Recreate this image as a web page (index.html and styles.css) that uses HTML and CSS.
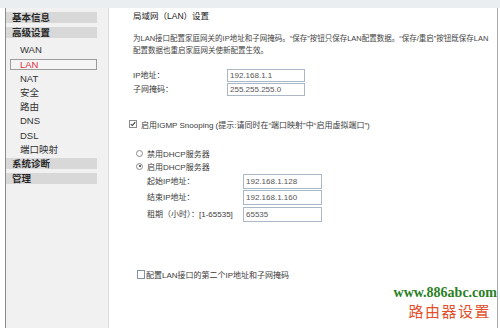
FILE: index.html
```html
<!DOCTYPE html>
<html lang="zh-CN">
<head>
<meta charset="utf-8">
<title>局域网（LAN）设置</title>
<link rel="stylesheet" href="styles.css">
</head>
<body>
<div class="topband"></div>
<div class="frame">
  <nav class="side">
    <div class="hd">基本信息</div>
    <div class="hd">高级设置</div>
    <ul class="sub">
      <li>WAN</li>
      <li class="active"><span>LAN</span></li>
      <li>NAT</li>
      <li>安全</li>
      <li>路由</li>
      <li>DNS</li>
      <li>DSL</li>
      <li>端口映射</li>
    </ul>
    <div class="hd">系统诊断</div>
    <div class="hd">管理</div>
  </nav>
  <main class="main">
    <h1 class="title">局域网（LAN）设置</h1>
    <p class="desc">为LAN接口配置家庭网关的IP地址和子网掩码。“保存”按钮只保存LAN配置数据。“保存/重启”按钮既保存LAN<br>配置数据也重启家庭网关使新配置生效。</p>

    <div class="ipgrid">
      <span class="lbl">IP地址：</span><span class="inp">192.168.1.1</span>
      <span class="lbl">子网掩码：</span><span class="inp">255.255.255.0</span>
    </div>

    <div class="check igmp">
      <span class="cb"><svg viewBox="0 0 8 8" width="6" height="6"><polyline points="1,4 3,6 7,1.5" fill="none" stroke="#2b3a2b" stroke-width="1.4"/></svg></span>
      <span>启用IGMP Snooping (提示:请同时在“端口映射”中“启用虚拟端口”)</span>
    </div>

    <div class="radios">
      <div class="radio"><span class="rb"></span><span>禁用DHCP服务器</span></div>
      <div class="radio"><span class="rb on"></span><span>启用DHCP服务器</span></div>
    </div>

    <div class="dhcpgrid">
      <span class="lbl">起始IP地址：</span><span class="inp">192.168.1.128</span>
      <span class="lbl">结束IP地址：</span><span class="inp">192.168.1.160</span>
      <span class="lbl">租期（小时）：[1-65535]</span><span class="inp">65535</span>
    </div>

    <div class="check second">
      <span class="cb empty"></span>
      <span>配置LAN接口的第二个IP地址和子网掩码</span>
    </div>
  </main>
</div>
<div class="watermark">
  <div class="wm-url">www.886abc.com</div>
  <div class="wm-cn">路由器设置</div>
</div>
</body>
</html>
```

FILE: styles.css
```css
html, body {
  margin: 0;
  padding: 0;
}
body {
  width: 500px;
  height: 328px;
  overflow: hidden;
  background: #ffffff;
  font-family: "Liberation Sans", "Noto Sans CJK SC", sans-serif;
  color: #333;
  position: relative;
}
.topband {
  height: 8px;
  background: #eaeef0;
}
.frame {
  display: flex;
  height: 320px;
}
.side {
  box-sizing: border-box;
  width: 104px;
  margin-left: 5px;
  border-left: 1px solid #8c8c8c;
  border-right: 1px solid #dedede;
  background: #f1f1f1;
  padding-top: 4px;
  font-size: 9.5px;
}
.hd {
  width: 91px;
  height: 11px;
  line-height: 11px;
  background: #d8d8d8;
  padding-left: 6px;
  box-sizing: border-box;
  font-weight: 700;
  color: #262626;
  margin-bottom: 4px;
  white-space: nowrap;
}
.sub {
  list-style: none;
  margin: 0 0 0.7px 0;
  padding: 1px 0 0 0;
}
.sub li {
  height: 14.3px;
  line-height: 14.3px;
  padding-left: 14px;
  color: #333;
  white-space: nowrap;
}
.sub li.active {
  padding-left: 4px;
  display: flex;
  align-items: center;
}
.sub li.active span {
  box-sizing: border-box;
  width: 87px;
  height: 11px;
  line-height: 9px;
  border: 1px solid #9c9c9c;
  padding-left: 9px;
  color: #e0303c;
  background: #f4f4f4;
}
.main {
  box-sizing: border-box;
  width: 389px;
  border-right: 1px solid #acacac;
  padding: 3px 0 0 24px;
  font-size: 8px;
  color: #3a3a3a;
}
.title {
  margin: 0;
  font-size: 8.5px;
  font-weight: 400;
  line-height: 11px;
  color: #202020;
  white-space: nowrap;
}
.desc {
  margin: 11px 0 0 0;
  line-height: 11.5px;
  white-space: nowrap;
  font-size: 7.5px;
  color: #444;
}
.ipgrid {
  display: grid;
  grid-template-columns: 94px 78px;
  grid-auto-rows: 13px;
  row-gap: 1px;
  margin-top: 13px;
  align-items: center;
}
.dhcpgrid {
  display: grid;
  grid-template-columns: 96px 79px;
  grid-auto-rows: 15px;
  row-gap: 1.5px;
  margin-top: 1px;
  padding-left: 14px;
  align-items: center;
}
.lbl {
  white-space: nowrap;
  line-height: 11px;
}
.inp {
  box-sizing: border-box;
  height: 100%;
  border: 1px solid #a9b7c6;
  background: #fff;
  padding-left: 2px;
  color: #555;
  display: flex;
  align-items: center;
  white-space: nowrap;
}
.check {
  display: flex;
  align-items: center;
  height: 11px;
  white-space: nowrap;
}
.igmp {
  margin-top: 22.5px;
  margin-left: -4px;
  gap: 4px;
}
.cb {
  box-sizing: border-box;
  width: 8px;
  height: 8px;
  border: 1px solid #8b8b8b;
  background: #fff;
  display: flex;
  align-items: center;
  justify-content: center;
  flex: none;
}
.cb.empty {
  border-color: #7f93ad;
  width: 8px;
  height: 9px;
}
.radios {
  margin-top: 17px;
  padding-left: 3px;
}
.radio {
  display: flex;
  align-items: center;
  gap: 4px;
  height: 13px;
  white-space: nowrap;
}
.rb {
  box-sizing: border-box;
  width: 7px;
  height: 7px;
  border-radius: 50%;
  border: 1px solid #8a8a8a;
  background: #fff;
  position: relative;
  flex: none;
}
.rb.on::after {
  content: "";
  position: absolute;
  left: 1.5px;
  top: 1.5px;
  width: 2px;
  height: 2px;
  border-radius: 50%;
  background: #2c2c2c;
}
.second {
  margin-top: 47.5px;
  margin-left: 4px;
  gap: 1px;
}
.watermark {
  position: absolute;
  right: 3px;
  top: 284px;
  display: flex;
  flex-direction: column;
  align-items: flex-end;
}
.wm-url {
  font-family: "Liberation Serif", serif;
  font-weight: 700;
  font-size: 14px;
  line-height: 17px;
  color: #2a7f26;
  white-space: nowrap;
}
.wm-cn {
  font-family: "Noto Sans CJK SC", sans-serif;
  font-size: 15px;
  line-height: 20px;
  letter-spacing: 1.5px;
  color: #e4502c;
  padding-right: 6px;
  white-space: nowrap;
}
```
